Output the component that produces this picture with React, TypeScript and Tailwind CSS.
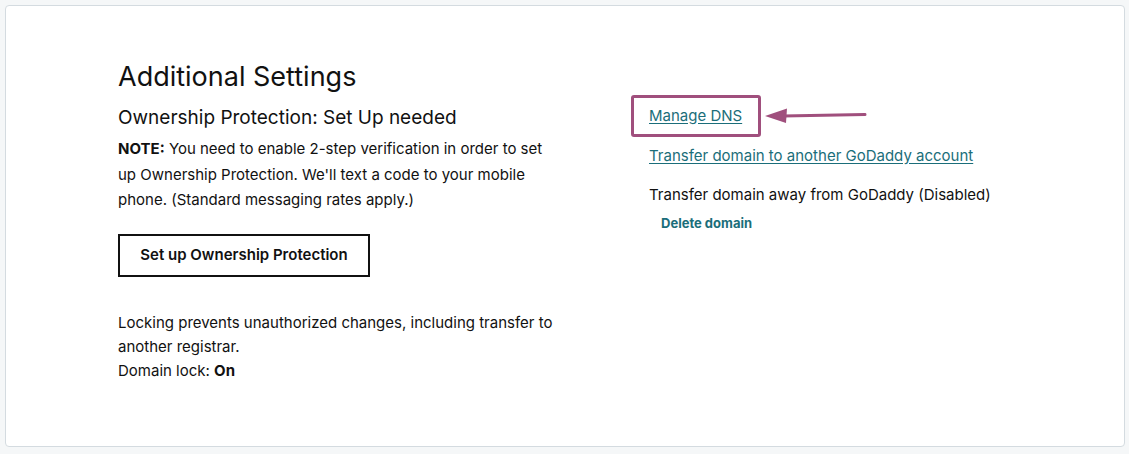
import React from 'react';

const font = { fontFamily: 'Inter, "Liberation Sans", sans-serif' };

function Arrow() {
  return (
    <svg width="104" height="20" viewBox="0 0 104 20" className="ml-[4px]">
      <path d="M18 10 L100 8.5" stroke="#a04f7d" strokeWidth="3" strokeLinecap="round" fill="none" />
      <path d="M0 10 L22 2.5 L21 17 Z" fill="#a04f7d" />
    </svg>
  );
}

export default function App() {
  return (
    <div className="min-h-[454px] w-[1129px] bg-[#f5f7f8] p-[5px] text-[#111]" style={font}>
      <div className="h-[442px] w-[1120px] rounded-[4px] border border-[#d4dbe0] bg-white">
        <div className="flex pl-[112px] pt-[53px]">
          {/* Left column */}
          <div className="w-[460px]">
            <h1 className="text-[27px] leading-[36px] font-normal text-[#111]">Additional Settings</h1>
            <h2 className="mt-[10px] text-[19px] leading-[26px] text-[#111]">Ownership Protection: Set Up needed</h2>
            <p className="mt-[5px] w-[445px] text-[15px] leading-[25.5px] text-[#111]">
              <span className="font-bold">NOTE:</span> You need to enable 2-step verification in order to set
              up Ownership Protection. We'll text a code to your mobile phone. (Standard messaging rates apply.)
            </p>
            <button className="mt-[21px] h-[43px] w-[252px] border-2 border-[#111] text-[15px] font-semibold text-[#111]">
              Set up Ownership Protection
            </button>
            <p className="mt-[34px] w-[450px] text-[15px] leading-[24px] text-[#111]">
              Locking prevents unauthorized changes, including transfer to another registrar.
            </p>
            <p className="text-[15px] leading-[24px] text-[#111]">
              Domain lock: <span className="font-bold">On</span>
            </p>
          </div>

          {/* Right column */}
          <div className="ml-[71px] pt-[36px] text-[15px]">
            <div className="flex items-center">
              <div className="-ml-[18px] flex h-[42px] items-center rounded-[3px] border-[3px] border-[#a04f7d] pl-[15px] pr-[16px]">
                <a href="#" className="text-[#1b6e7a] underline underline-offset-2">Manage DNS</a>
              </div>
              <Arrow />
            </div>
            <a href="#" className="mt-[7px] block leading-[24px] text-[#1b6e7a] underline underline-offset-2">
              Transfer domain to another GoDaddy account
            </a>
            <div className="mt-[15px] leading-[24px] text-[#111]">Transfer domain away from GoDaddy (Disabled)</div>
            <button className="mt-[5px] pl-[12px] text-[13px] leading-[22px] font-bold text-[#1b6e7a]">Delete domain</button>
          </div>
        </div>
      </div>
    </div>
  );
}
